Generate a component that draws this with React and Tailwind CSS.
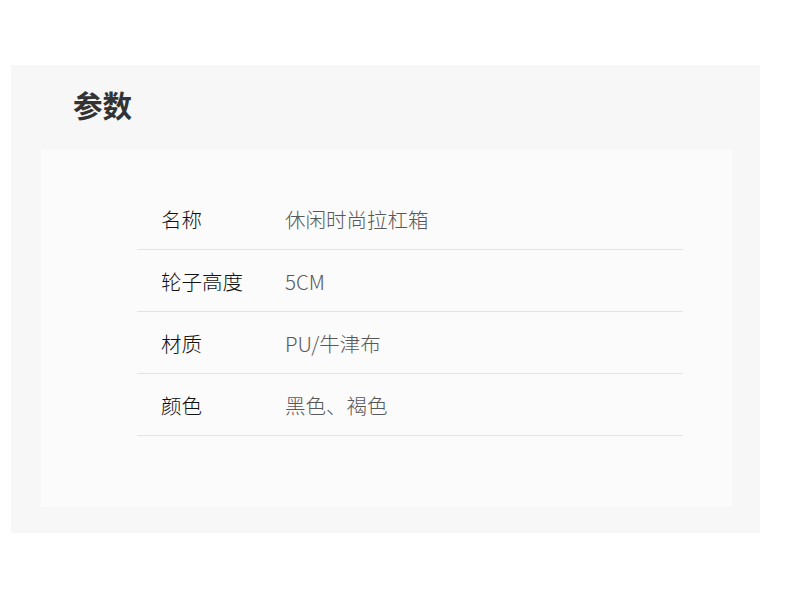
const specs = [
  { label: "名称", value: "休闲时尚拉杠箱" },
  { label: "轮子高度", value: "5CM" },
  { label: "材质", value: "PU/牛津布" },
  { label: "颜色", value: "黑色、褐色" },
];

const font = { fontFamily: '"Noto Sans CJK SC", "Noto Sans", sans-serif' };

export default function App() {
  return (
    <div className="h-[611px] w-[790px] bg-white pl-[11px] pt-[65px]" style={font}>
      <div className="h-[468px] w-[749px] bg-[#f7f7f7]">
        <div className="flex h-[85px] items-center pb-[8px] pl-[62px]">
          <h2 className="text-[29.5px] font-bold leading-[36px] text-[#333]">参数</h2>
        </div>
        <div className="ml-[30px] h-[357px] w-[691px] bg-[#fbfbfb] pt-[38px]">
          <div className="ml-[96px] w-[546px]">
            {specs.map((row) => (
              <div
                key={row.label}
                className="flex h-[62px] items-center border-b border-[#e4e4e4] pl-[24px] leading-[28px]"
              >
                <span className="w-[124px] text-[20.5px] font-light text-[#111]">{row.label}</span>
                <span className="text-[20.5px] font-light text-[#585858]">{row.value}</span>
              </div>
            ))}
          </div>
        </div>
      </div>
    </div>
  );
}
